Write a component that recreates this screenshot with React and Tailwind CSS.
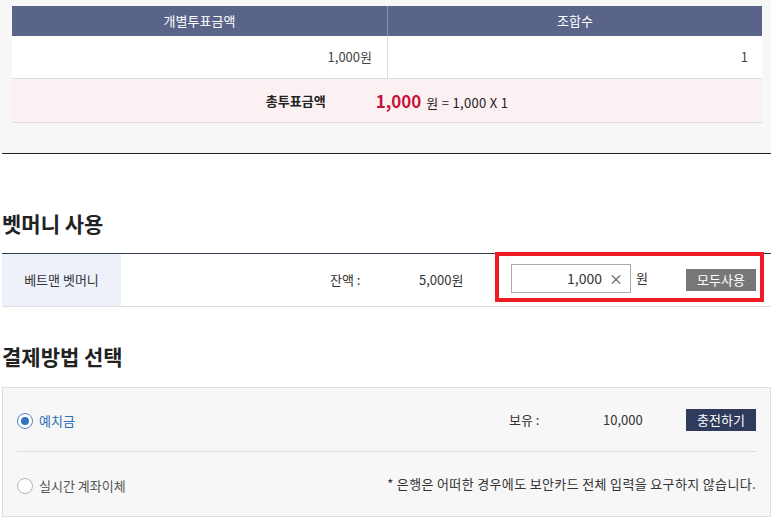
import React from 'react';

const Radio = ({ checked }) => (
    <span
        className={`w-4 h-4 rounded-full border bg-white flex items-center justify-center shrink-0 ${checked ? 'border-[#4a86d0]' : 'border-[#b5b5b5]'
            }`}
    >
        {checked && <span className="w-[8px] h-[8px] rounded-full bg-[#3175c2]" />}
    </span>
);

const App = () => {
    return (
        <div className="w-[781px] h-[522px] bg-white overflow-hidden font-['Noto_Sans_CJK_KR',sans-serif] text-[13px] text-[#333]">
            {/* Vote summary */}
            <div className="w-[771px] h-[153px] bg-[#f7f7f7] pt-[6px]">
                <div className="ml-[12px] w-[750px]">
                    <div className="flex h-[30px] bg-[#596488] text-white">
                        <div className="w-[375px] flex items-center justify-center">개별투표금액</div>
                        <div className="flex-1 flex items-center justify-center border-l border-[#8a92ad]">조합수</div>
                    </div>
                    <div className="flex h-[43px] bg-white border-b border-[#dddddd] text-[#444]">
                        <div className="w-[375px] flex items-center justify-end pr-[15px]">1,000원</div>
                        <div className="flex-1 flex items-center justify-end pr-[14px] border-l border-[#dddddd]">1</div>
                    </div>
                    <div className="flex h-[44px] items-center justify-center gap-[50px] bg-[#fcf1f2] border-b border-[#dddddd]">
                        <span className="font-bold text-[#222]">총투표금액</span>
                        <span className="flex items-baseline gap-[5px] text-[#222]">
                            <span className="text-[17px] font-bold text-[#c8133b]">1,000</span>
                            <span className="tracking-[0.3px]">원 = 1,000 X 1</span>
                        </span>
                    </div>
                </div>
            </div>
            <div className="ml-[2px] w-[769px] h-px bg-[#222]" />

            {/* Betmoney */}
            <h2 className="ml-[2px] mt-[56px] mb-[17px] h-[26px] leading-[26px] text-[21px] font-bold text-[#222]">벳머니 사용</h2>
            <div className="ml-[2px] w-[769px] h-[54px] flex border-t border-b border-t-[#2f3b55] border-b-[#dddddd]">
                <div className="w-[119px] bg-[#eef1fa] flex items-center justify-center text-[#333]">베트맨 벳머니</div>
                <span className="ml-[209px] w-[89px] self-center">잔액 :</span>
                <span className="w-[76px] self-center">5,000원</span>
                <div className="relative flex items-center pl-[16px]">
                    <div className="w-[120px] h-[29px] -mt-[3px] bg-white border border-[#aaaaaa] flex items-center justify-end pr-[7px] gap-[7px] text-[14px] text-[#333]">
                        <span>1,000</span>
                        <span className="text-[#555]">×</span>
                    </div>
                    <span className="ml-[5px] w-[50px] -mt-[5px]">원</span>
                    <button className="w-[70px] h-[22px] bg-[#777777] text-white text-[13px]">모두사용</button>
                    <div className="absolute left-0 top-[-2px] w-[269px] h-[50px] border-4 border-[#ee1c25] pointer-events-none" />
                </div>
            </div>

            {/* Payment method */}
            <h2 className="ml-[2px] mt-[36px] mb-[18px] h-[26px] leading-[26px] text-[21px] font-bold text-[#222]">결제방법 선택</h2>
            <div className="ml-[2px] w-[769px] h-[130px] bg-[#f7f7f7] border border-[#dddddd] px-[14px]">
                <div className="h-[63px] flex items-center">
                    <div className="flex items-center gap-[6px] mt-[3px]">
                        <Radio checked />
                        <span className="text-[#2a6db5]">예치금</span>
                    </div>
                    <span className="ml-auto w-[94px]">보유 :</span>
                    <span className="w-[83px]">10,000</span>
                    <button className="w-[70px] h-[22px] bg-[#2e3b5c] text-white text-[13px]">충전하기</button>
                </div>
                <div className="h-px bg-[#dddddd]" />
                <div className="h-[64px] flex items-center">
                    <div className="flex items-center gap-[6px] mt-[3px]">
                        <Radio />
                        <span className="text-[#555]">실시간 계좌이체</span>
                    </div>
                    <span className="ml-auto tracking-[0.35px]">* 은행은 어떠한 경우에도 보안카드 전체 입력을 요구하지 않습니다.</span>
                </div>
            </div>
        </div>
    );
};

export default App;
